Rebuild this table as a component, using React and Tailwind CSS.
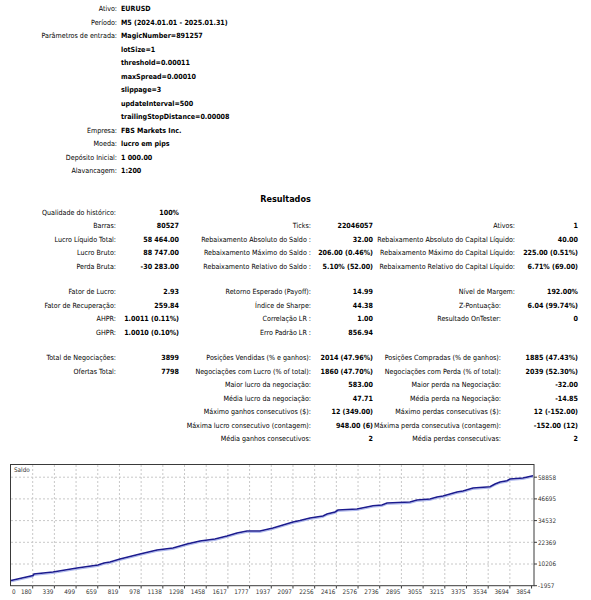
const font = { fontFamily: '"DejaVu Sans Condensed", "DejaVu Sans", sans-serif' };

const settings = [
  ['Ativo:', 'EURUSD'],
  ['Período:', 'M5 (2024.01.01 - 2025.01.31)'],
  ['Parâmetros de entrada:', 'MagicNumber=891257'],
  ['', 'lotSize=1'],
  ['', 'threshold=0.00011'],
  ['', 'maxSpread=0.00010'],
  ['', 'slippage=3'],
  ['', 'updateInterval=500'],
  ['', 'trailingStopDistance=0.00008'],
  ['Empresa:', 'FBS Markets Inc.'],
  ['Moeda:', 'lucro em pips'],
  ['Depósito Inicial:', '1 000.00'],
  ['Alavancagem:', '1:200'],
];

const block1 = [
  ['Qualidade do histórico:', '100%', '', '', '', ''],
  ['Barras:', '80527', 'Ticks:', '22046057', 'Ativos:', '1'],
  ['Lucro Líquido Total:', '58 464.00', 'Rebaixamento Absoluto do Saldo :', '32.00', 'Rebaixamento Absoluto do Capital Líquido:', '40.00'],
  ['Lucro Bruto:', '88 747.00', 'Rebaixamento Máximo do Saldo :', '206.00 (0.46%)', 'Rebaixamento Máximo do Capital Líquido:', '225.00 (0.51%)'],
  ['Perda Bruta:', '-30 283.00', 'Rebaixamento Relativo do Saldo :', '5.10% (52.00)', 'Rebaixamento Relativo do Capital Líquido:', '6.71% (69.00)'],
];

const block2 = [
  ['Fator de Lucro:', '2.93', 'Retorno Esperado (Payoff):', '14.99', 'Nível de Margem:', '192.00%'],
  ['Fator de Recuperação:', '259.84', 'Índice de Sharpe:', '44.38', 'Z-Pontuação:', '6.04 (99.74%)', true],
  ['AHPR:', '1.0011 (0.11%)', 'Correlação LR :', '1.00', 'Resultado OnTester:', '0', true],
  ['GHPR:', '1.0010 (0.10%)', 'Erro Padrão LR :', '856.94', '', ''],
];

const block3 = [
  ['Total de Negociações:', '3899', 'Posições Vendidas (% e ganhos):', '2014 (47.96%)', 'Posições Compradas (% de ganhos):', '1885 (47.43%)', true],
  ['Ofertas Total:', '7798', 'Negociações com Lucro (% of total):', '1860 (47.70%)', 'Negociações com Perda (% of total):', '2039 (52.30%)', true],
  ['', '', 'Maior lucro da negociação:', '583.00', 'Maior perda na Negociação:', '-32.00', true],
  ['', '', 'Média lucro da negociação:', '47.71', 'Média perda na Negociação:', '-14.85', true],
  ['', '', 'Máximo ganhos consecutivos ($):', '12 (349.00)', 'Máximo perdas consecutivas ($):', '12 (-152.00)', true],
  ['', '', 'Máxima lucro consecutivo (contagem):', '948.00 (6)', 'Máxima perda consecutiva (contagem):', '-152.00 (12)', true],
  ['', '', 'Média ganhos consecutivos:', '2', 'Média perdas consecutivas:', '2', true],
];

function ResultRow({ r }) {
  return (
    <div className="grid grid-cols-[116px_63px_132px_62px_142px_63px] h-[13.5px] leading-[13.5px] whitespace-nowrap">
      <div className="text-right">{r[0]}</div>
      <div className="text-right font-bold">{r[1]}</div>
      <div className="text-right">{r[2]}</div>
      <div className="text-right font-bold">{r[3]}</div>
      <div className={`text-right ${r[6] ? 'pr-[14px]' : ''}`}>{r[4]}</div>
      <div className="text-right font-bold">{r[5]}</div>
    </div>
  );
}

const xLabels = ['0', '180', '339', '499', '659', '819', '978', '1138', '1298', '1458', '1617', '1777', '1937', '2097', '2256', '2416', '2576', '2736', '2895', '3055', '3215', '3375', '3534', '3694', '3854'];
const yLabels = ['58858', '46695', '34532', '22369', '10206', '-1957'];

const curve = [
  [11, 580.5], [22, 578], [33, 575.5], [34, 574], [53, 572], [77, 568], [98, 565], [104, 563], [110, 562], [120, 559],
  [140, 554], [157, 550], [173, 548], [187, 544], [200, 541], [215, 539], [227, 536], [237, 533], [247, 531], [260, 531],
  [273, 528], [283, 525], [293, 522], [300, 520.5], [310, 518], [323, 516], [327, 514], [335, 512], [338, 510], [357, 509],
  [367, 507], [373, 505.7], [382, 505], [387, 503], [410, 502], [417, 500], [430, 499], [437, 497], [443, 496], [457, 492],
  [463, 491], [473, 488], [490, 486.7], [495, 484], [500, 482], [507, 480.7], [510, 479], [523, 478], [533, 475.7],
];

function Chart() {
  const gx = Array.from({ length: 24 }, (_, i) => 11 + 21.69 * (i + 1));
  const gy = yLabels.map((_, j) => 477.2 + 21.7 * j);
  const pts = curve.map(p => p.join(',')).join(' ');
  const pts2 = curve.map(p => `${p[0]},${p[1] + 1.4}`).join(' ');
  return (
    <svg width="591" height="137" viewBox="0 463 591 137" className="block">
      <rect x="10.5" y="464.5" width="523.5" height="121.2" fill="white" stroke="#3a3a3a" />
      {gx.slice(0, 23).map(x => (
        <line key={x} x1={x} y1="465" x2={x} y2="585.5" stroke="#c8c8c8" strokeDasharray="2 2" />
      ))}
      {gy.slice(0, 5).map(y => (
        <line key={y} x1="11" y1={y} x2="533.5" y2={y} stroke="#c8c8c8" strokeDasharray="2 2" />
      ))}
      {gx.map(x => (
        <line key={'t' + x} x1={x} y1="585.7" x2={x} y2="588.5" stroke="#3a3a3a" />
      ))}
      {gy.map(y => (
        <line key={'r' + y} x1="534" y1={y} x2="537" y2={y} stroke="#3a3a3a" />
      ))}
      <polyline points={pts2} fill="none" stroke="#a9b4ee" strokeWidth="1" />
      <polyline points={pts} fill="none" stroke="#1b1b8e" strokeWidth="1.6" />
      <text x="14" y="471.5" fontSize="6.3" fill="#333" style={font}>Saldo</text>
      <text x="12" y="594" fontSize="6.3" fill="#333" style={font}>0</text>
      {xLabels.slice(1).map((l, i) => (
        <text key={l} x={gx[i] - 1} y="594" fontSize="6.3" fill="#333" textAnchor="end" style={font}>{l}</text>
      ))}
      {yLabels.map((l, j) => (
        <text key={l} x="538" y={gy[j] + 2.3} fontSize="6.3" fill="#333" style={font}>{l}</text>
      ))}
    </svg>
  );
}

export default function App() {
  return (
    <div className="w-[591px] h-[600px] bg-white text-black text-[7.1px] overflow-hidden" style={font}>
      <div className="pt-[2px]">
        {settings.map(([l, v], i) => (
          <div key={i} className="grid grid-cols-[117px_1fr] gap-x-[4px] h-[13.5px] leading-[13.5px] whitespace-nowrap">
            <div className="text-right">{l}</div>
            <div className="font-bold">{v}</div>
          </div>
        ))}
      </div>
      <div className="h-[14px]" />
      <div className="w-[578px] pr-[7px] h-[14px] leading-[14px] text-center font-bold text-[9px]">Resultados</div>
      {block1.map((r, i) => <ResultRow key={i} r={r} />)}
      <div className="h-[12px]" />
      {block2.map((r, i) => <ResultRow key={i} r={r} />)}
      <div className="h-[12px]" />
      {block3.map((r, i) => <ResultRow key={i} r={r} />)}
      <div className="h-[17.5px]" />
      <Chart />
    </div>
  );
}
